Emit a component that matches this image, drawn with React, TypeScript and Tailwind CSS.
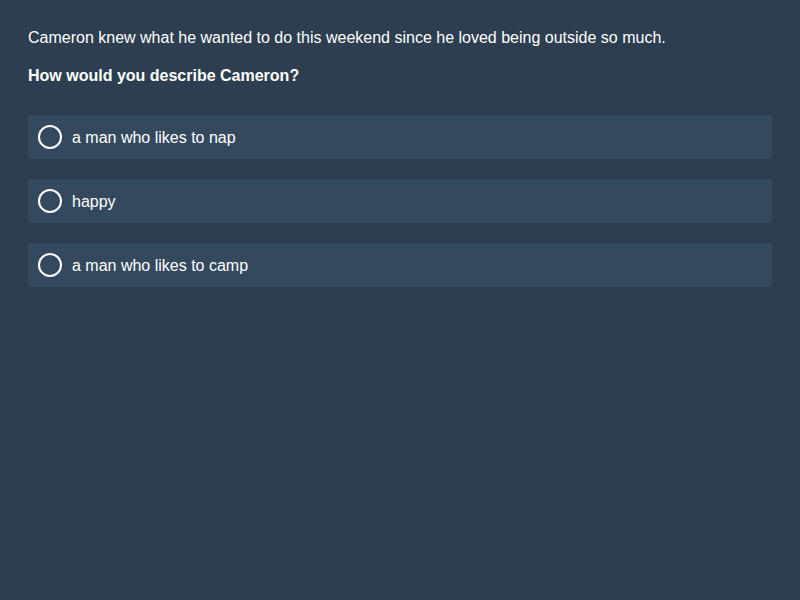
export default function App() {
  const options = ["a man who likes to nap", "happy", "a man who likes to camp"];
  return (
    <div className="min-h-[600px] w-full bg-[#2c3e50] px-[28px] pt-[28px] text-white" style={{ fontFamily: '"Liberation Sans", Arial, sans-serif' }}>
      <p className="text-[16px] leading-[20px] mb-[18px]">Cameron knew what he wanted to do this weekend since he loved being outside so much.</p>
      <p className="text-[16px] leading-[20px] font-bold mb-[29px]">How would you describe Cameron?</p>
      <div className="flex flex-col gap-[20px]">
        {options.map((o) => (
          <div key={o} className="flex h-[44px] items-center rounded-[4px] bg-[#34495e] pl-[10px]">
            <span className="box-border h-[24px] w-[24px] shrink-0 rounded-full border-2 border-white" />
            <span className="ml-[10px] pt-[2px] text-[16px] leading-[20px]">{o}</span>
          </div>
        ))}
      </div>
    </div>
  );
}
